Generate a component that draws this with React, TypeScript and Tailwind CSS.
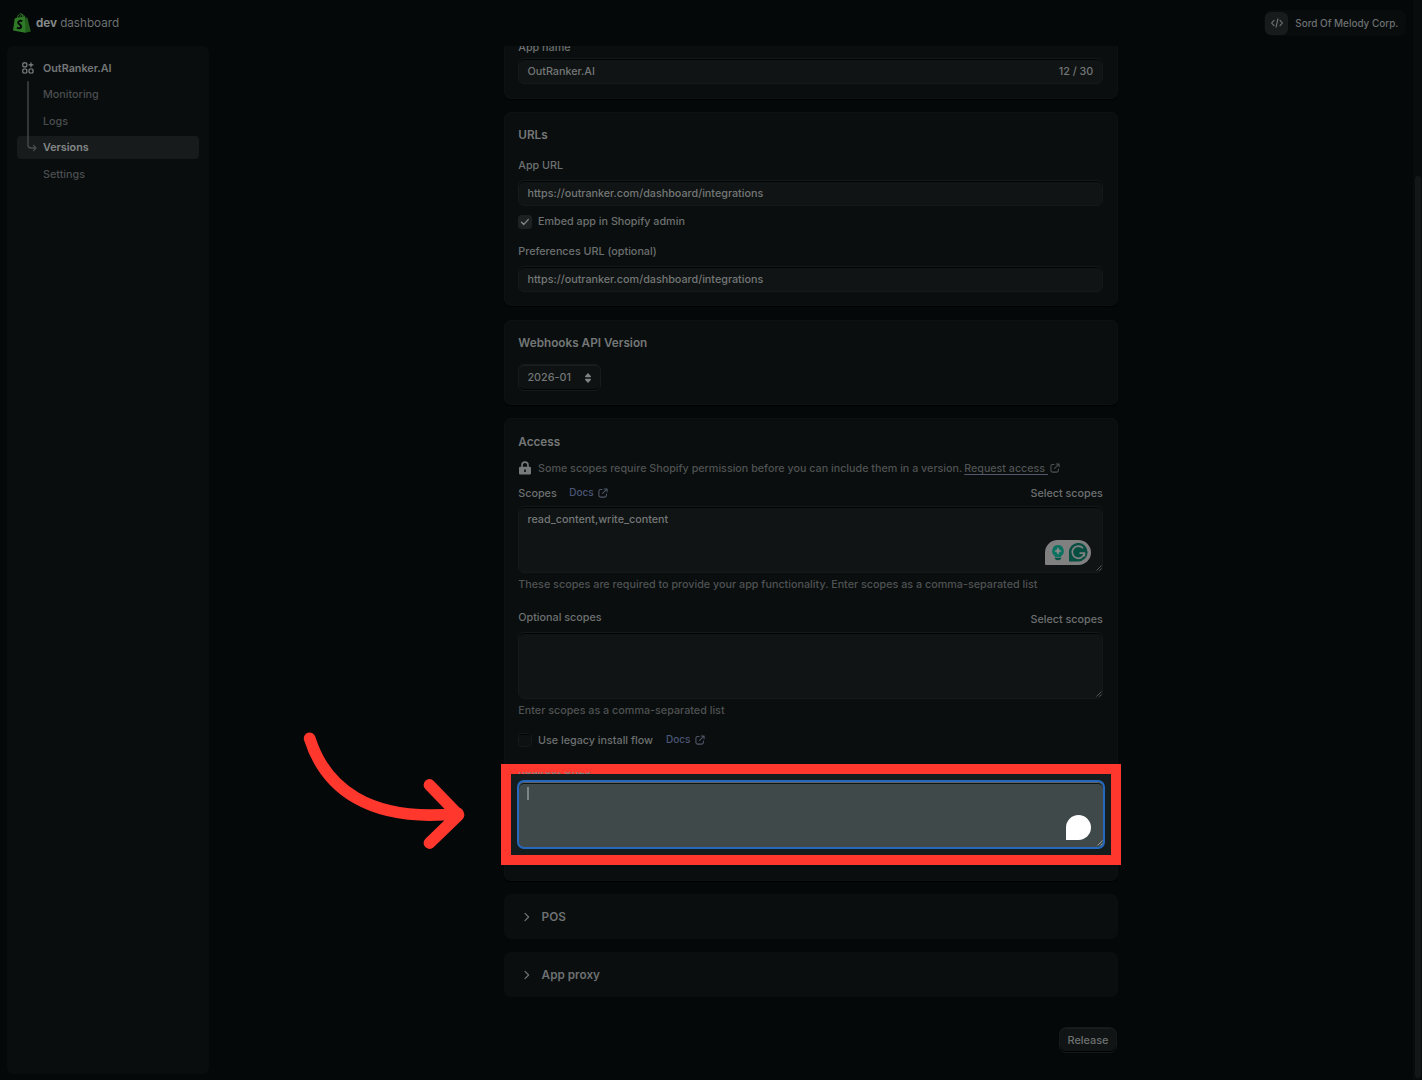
import React from "react";

const T = "h-4 leading-4 whitespace-nowrap";
const LOW = "h-4 leading-[18px] whitespace-nowrap";

function External({ className = "" }: { className?: string }) {
  return (
    <svg viewBox="0 0 10 10" fill="none" stroke="currentColor" strokeWidth="1.05" strokeLinecap="round" strokeLinejoin="round" className={"w-[10px] h-[10px] " + className}>
      <path d="M4 1.5H2.5A1.7 1.7 0 0 0 .9 3.2V7.5A1.6 1.6 0 0 0 2.5 9.1H6.7A1.7 1.7 0 0 0 8.4 7.5V6M6.2.9H9.1V3.8M9 1L4.6 5.4" />
    </svg>
  );
}

function Grip({ className = "stroke-[#666b6b]" }: { className?: string }) {
  return (
    <svg viewBox="0 0 6 6" strokeWidth="0.8" className={"absolute right-[0px] bottom-[1px] w-[6px] h-[6px] " + className}>
      <path d="M.5 5.5L5.5 .5M3.5 5.5L5.5 3.5" />
    </svg>
  );
}

function Card({ children, className = "" }: { children: React.ReactNode; className?: string }) {
  return (
    <section className={"w-[614px] shrink-0 rounded-[7px] bg-[#0a0e0e] pl-[14.3px] pr-[14px] shadow-[0_1px_1px_#000,inset_0_0_0_1px_#0d1111] " + className}>
      {children}
    </section>
  );
}

function Field({ children, className = "" }: { children?: React.ReactNode; className?: string }) {
  return (
    <div className={"relative w-[585px] rounded-[6px] border border-[#151919] bg-[#101414] px-[8.2px] shadow-[inset_0_1px_0_#020404] text-[#747777] " + className}>
      {children}
    </div>
  );
}

function Docs() {
  return (
    <span className="flex items-center gap-[4.5px] text-[#4a5676] text-[10px] h-4">
      <span className="pb-[2px]">Docs</span> <External className="text-[#51586a]" />
    </span>
  );
}

function Chevron() {
  return (
    <svg viewBox="0 0 6 10" fill="none" stroke="#707474" strokeWidth="1.2" strokeLinecap="round" strokeLinejoin="round" className="w-[6px] h-[10px]">
      <path d="M1 1.4L4.6 5L1 8.6" />
    </svg>
  );
}

function NavItem({ label, active }: { label: string; active?: boolean }) {
  return (
    <div className={active ? "h-[23px] mb-[3.5px] rounded-[4px] bg-[#171b1c] pl-[26px] leading-[24px] font-semibold text-[#858888]" : "h-[23px] mb-[3.5px] pl-[26px] leading-[23.5px] text-[#4b4e4f]"}>
      {label}
    </div>
  );
}

export default function App() {
  return (
    <div className="relative w-[1422px] h-[1080px] overflow-hidden bg-[#040809] font-['Inter',sans-serif] text-[10.77px] font-medium text-[#6d7071] flex flex-col">
      <header className="h-[46px] shrink-0 flex items-center justify-between pl-[13px] pr-[16px]">
        <div className="flex items-center text-[11.7px]">
          <svg viewBox="0 0 18 20" className="w-[18px] h-[20px]">
            <path d="M1.8 5.2L11.8 3.2L14 18.3L12.3 19.7L0 17.6Z" fill="#2f7a26" />
            <path d="M12.3 3.6L14.6 5.4L17.8 18.4L12.3 19.7Z" fill="#235f1c" />
            <path d="M4.2 5.4C4.7 2.5 6.3.7 7.8.7C9.2.7 9.8 2.2 9.8 4.2M6.8 4.7C7.2 2.5 8.5 1.4 9.5 1.6C10.7 1.8 11.2 3 11.3 3.8" fill="none" stroke="#2f7a26" strokeWidth="1" />
            <path d="M9.3 8.2C7.6 7.4 5.3 7.8 5.2 9.6C5.2 11.5 8.2 11.4 8.1 13.6C8 15.5 5.6 15.7 4 14.5" fill="none" stroke="#040809" strokeWidth="2" />
          </svg>
          <span className="ml-[5px] pt-[2px] font-bold text-[#858888]">dev</span>
          <span className="ml-[3px] pt-[2px] font-normal text-[#6d7071]">dashboard</span>
        </div>
        <div className="w-[142px] h-[26px] rounded-[7px] bg-[#080c0d] flex items-center pl-[1px]">
          <div className="w-[23px] h-[23px] shrink-0 rounded-[6px] bg-[#171b1b] flex items-center justify-center">
            <svg viewBox="0 0 12 10" fill="none" stroke="#747777" strokeWidth="1.1" strokeLinecap="round" strokeLinejoin="round" className="w-[12px] h-[10px]">
              <path d="M3 2.3L.6 5L3 7.7M9 2.3L11.4 5L9 7.7M6.9 .8L5.1 9.2" />
            </svg>
          </div>
          <span className="ml-[7.3px] text-[9.92px] whitespace-nowrap">Sord Of Melody Corp.</span>
        </div>
      </header>

      <div className="flex flex-1 min-h-0">
        <aside className="relative ml-[7px] w-[202px] h-[1028px] rounded-[6px] bg-[#090d0e] pt-[10.5px] pl-[10px] pr-[10px]">
          <div className="flex items-center h-[23px] mb-[3.5px] pl-[5px] font-semibold text-[#747777]">
            <svg viewBox="0 0 12 12" fill="none" stroke="#858888" strokeWidth="1.15" strokeLinejoin="round" strokeLinecap="round" className="w-[12px] h-[12px]">
              <rect x="0.8" y="0.8" width="4" height="4" rx="1" />
              <rect x="0.8" y="7" width="4" height="4" rx="1" />
              <rect x="7" y="7" width="4" height="4" rx="1" />
              <path d="M9 .8V4.8M7 2.8H11" />
            </svg>
            <span className="ml-[9px] pt-[2px]">OutRanker.AI</span>
          </div>
          <NavItem label="Monitoring" />
          <NavItem label="Logs" />
          <NavItem label="Versions" active />
          <NavItem label="Settings" />
          <svg viewBox="0 0 12 72" fill="none" stroke="#4a4e4e" strokeWidth="1.3" strokeLinecap="round" strokeLinejoin="round" className="absolute left-[20px] top-[35px] w-[12px] h-[72px]">
            <path d="M1 .7V64Q1 67 4 67H8.6M6.5 64.4L9 67L6.5 69.6" />
          </svg>
        </aside>

        <main className="ml-[295px] w-[614px] h-[1034px] overflow-hidden flex flex-col">
          <Card className="h-[60px] -mt-[7px]">
            <div className={LOW}>App name</div>
            <Field className="mt-[3px] h-[26px] leading-[26px] flex justify-between">
              <span>OutRanker.AI</span>
              <span className="mr-[0.8px]">12 / 30</span>
            </Field>
          </Card>

          <Card className="mt-[13px] h-[194px] pt-[15px]">
            <div className={T + " text-[11.75px] font-semibold text-[#747777]"}>URLs</div>
            <div className={LOW + " mt-[14px]"}>App URL</div>
            <Field className="mt-[7px] h-[26px] leading-[25px]">https://outranker.com/dashboard/integrations</Field>
            <div className={T + " mt-[8px] flex items-center"}>
              <span className="w-[14px] h-[14px] rounded-[3.5px] bg-[#1d2121] flex items-center justify-center">
                <svg viewBox="0 0 10 8" fill="none" stroke="#858888" strokeWidth="1.4" strokeLinecap="round" strokeLinejoin="round" className="w-[10px] h-[8px]">
                  <path d="M1.5 4.2L3.8 6.4L8.2 1.6" />
                </svg>
              </span>
              <span className="ml-[5.7px]">Embed app in Shopify admin</span>
            </div>
            <div className={LOW + " mt-[13px]"}>Preferences URL (optional)</div>
            <Field className="mt-[7px] h-[26px] leading-[25px]">https://outranker.com/dashboard/integrations</Field>
          </Card>

          <Card className="mt-[14px] h-[85px] pt-[15px]">
            <div className={T + " text-[11.75px] font-semibold text-[#747777]"}>Webhooks API Version</div>
            <div className="mt-[13px] w-[83px] h-[27px] rounded-[6px] border border-[#171b1b] bg-[#0e1212] shadow-[inset_0_1px_0_#1a1e1e,inset_0_-1px_0_#020404] flex items-center justify-between pl-[8.2px] pr-[8px] text-[#747777]">
              <span className="pt-[2px]">2026-01</span>
              <svg viewBox="0 0 8 10" fill="#808383" className="w-[8px] h-[10px]">
                <path d="M4 0L7 3.2Q7.2 4.2 6.2 4.2H1.8Q.8 4.2 1 3.2ZM4 10L7 6.8Q7.2 5.8 6.2 5.8H1.8Q.8 5.8 1 6.8Z" />
              </svg>
            </div>
          </Card>

          <Card className="mt-[13px] h-[463px] pt-[15px]">
            <div className={LOW + " text-[11.75px] font-semibold text-[#747777]"}>Access</div>
            <div className={T + " mt-[11px] flex items-center text-[#4f5253]"}>
              <svg viewBox="0 0 14 16" className="w-[14px] h-[16px]">
                <path d="M4 7V5Q4 2.1 7 2.1T10 5V7" fill="none" stroke="#777a7a" strokeWidth="1.6" />
                <path d="M1 8Q1 6.8 2.2 6.8H11.8Q13 6.8 13 8V13.5Q13 14.6 11.8 14.6H2.2Q1 14.6 1 13.5ZM6.2 9.6V12H7.8V9.6Z" fill="#777a7a" fillRule="evenodd" />
              </svg>
              <span className="ml-[5.7px] pt-[2px] text-[10.74px]">Some scopes require Shopify permission before you can include them in a version.</span>
              <span className="ml-[2px] pt-[2px] text-[10.7px] whitespace-pre underline underline-offset-2 decoration-[#51586a]">Request access </span>
              <External className="ml-[2px]" />
            </div>
            <div className={T + " mt-[9px] flex items-center"}>
              <span className="pt-[2px]">Scopes</span>
              <span className="ml-[12.5px]"><Docs /></span>
              <span className="ml-auto pt-[2px] mr-[1.2px]">Select scopes</span>
            </div>
            <Field className="mt-[5px] h-[67px] pt-[4px] leading-[17px]">
              read_content,write_content
              <div className="absolute right-[11px] bottom-[7px] w-[46px] h-[25px] rounded-[12.5px] rounded-bl-[1px] bg-[#808080] flex items-center pl-[6px] gap-[4px]">
                <svg viewBox="0 0 14 18" className="w-[14px] h-[18px]">
                  <path d="M7 1A6 6 0 0 1 10.4 11.8L9.9 13H4.1L3.6 11.8A6 6 0 0 1 7 1Z" fill="#087160" />
                  <path d="M7 3.6Q7.5 6.5 10.4 7Q7.5 7.5 7 10.4Q6.5 7.5 3.6 7Q6.5 6.5 7 3.6Z" fill="#8a8c8b" stroke="#8a8c8b" strokeWidth="0.5" />
                  <path d="M3.6 13.8H10.4Q10 16.2 7 16.2T3.6 13.8Z" fill="#075247" />
                </svg>
                <svg viewBox="0 0 19 19" className="w-[19px] h-[19px]">
                  <path d="M0 18.5V9.5A9.3 9.3 0 1 1 9.5 18.5Z" fill="#064d42" />
                  <path d="M14 5.2A6.1 6.1 0 1 0 15.4 10.2H10.5M15.4 10V13.4" fill="none" stroke="#808080" strokeWidth="1.7" />
                </svg>
              </div>
              <Grip />
            </Field>
            <div className={LOW + " mt-[3px] text-[#4f5253]"}>These scopes are required to provide your app functionality. Enter scopes as a comma-separated list</div>
            <div className={T + " mt-[18px] flex justify-between"}>
              <span>Optional scopes</span>
              <span className="pt-[2px] mr-[1.2px]">Select scopes</span>
            </div>
            <Field className="mt-[6px] h-[67px]"><Grip /></Field>
            <div className={LOW + " mt-[3px] text-[#4f5253]"}>Enter scopes as a comma-separated list</div>
            <div className={T + " mt-[14px] flex items-center"}>
              <span className="w-[14px] h-[14px] rounded-[3.5px] border border-[#151919] bg-[#0d1111] shadow-[inset_0_1px_0_#020404]" />
              <span className="ml-[5.7px] pt-[2px]">Use legacy install flow</span>
              <span className="ml-[13px]"><Docs /></span>
            </div>
          </Card>

          <Card className="mt-[13px] h-[45px] flex items-center gap-[11.3px] pl-[20.3px] shadow-none text-[11.75px] font-semibold">
            <Chevron /><span className="pt-[2px]">POS</span>
          </Card>
          <Card className="mt-[13px] h-[45px] flex items-center gap-[11.3px] pl-[20.3px] shadow-none text-[11.75px] font-semibold">
            <Chevron /><span className="pt-[2px]">App proxy</span>
          </Card>
          <button className="self-end mt-[30px] mr-[1px] w-[58px] h-[26px] rounded-[7px] border border-[#151919] bg-[#101414] shadow-[inset_0_1px_0_#1a1e1e,inset_0_-1px_0_#000] text-[10.9px] pt-[1px]">Release</button>
        </main>
      </div>

      {/* page scrollbar */}
      <div className="absolute right-0 top-0 w-[9px] h-full bg-[#080c0d]">
        <div className="ml-[2px] mt-[176px] w-[6px] h-[902px] rounded-[3px] bg-[#131718]" />
      </div>

      {/* highlighted field callout */}
      <div className="absolute left-[501px] top-[764px] w-[620px] h-[101px] border-[10px] border-[#ff372c] bg-[#151c1e]">
        {/* the label's lower edge shows past the frame */}
        <div className="absolute left-[7.3px] -top-[2px] h-[4px] w-[90px] overflow-hidden whitespace-nowrap text-[#8b7f7e]">
          <div className="-mt-[9px] h-4 leading-4">Redirect URLs</div>
        </div>
        <div className="ml-[6px] mt-[6px] relative w-[588px] h-[69px] rounded-[7px] border-2 border-[#2668bd] bg-[#3f494a] shadow-[inset_0_1px_0_#5b6465,inset_0_2px_0_#101617]">
          <div className="ml-[8px] mt-[5px] w-[2px] h-[13px] bg-[#7d8484]" />
          <div className="absolute right-[12px] bottom-[7px] w-[25px] h-[25px] rounded-full rounded-bl-[1px] bg-white" />
          <Grip className="stroke-[#b0b5b5]" />
        </div>
      </div>
      <svg viewBox="0 0 170 130" fill="none" stroke="#ff372c" strokeWidth="11.8" strokeLinecap="round" strokeLinejoin="round" className="absolute left-[300px] top-[725px] w-[170px] h-[130px]">
        <path d="M9.7 13.5C25 62 68 98 158 88.500M129.500 60L158.500 90L129.500 118" />
      </svg>
    </div>
  );
}
